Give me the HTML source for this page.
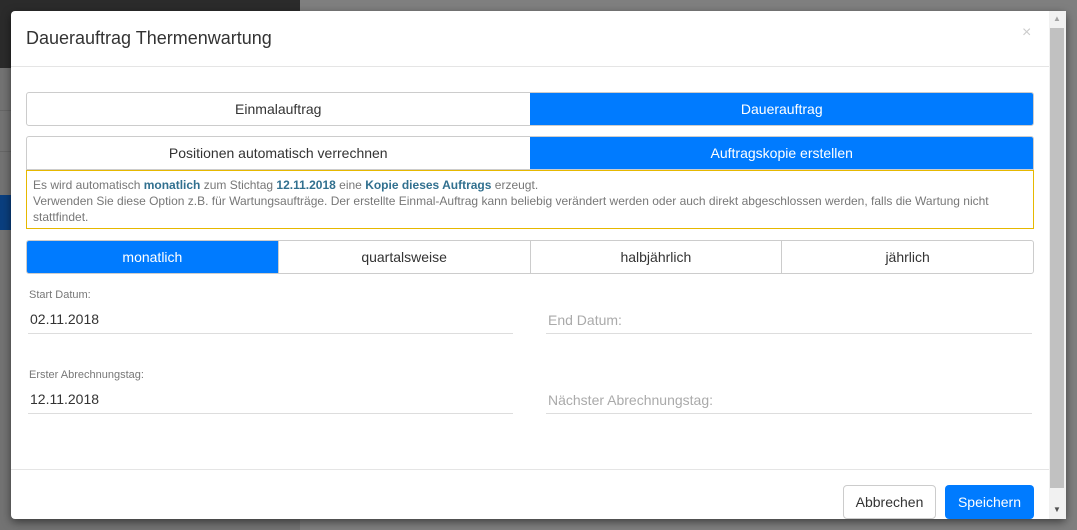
<!DOCTYPE html>
<html><head><meta charset="utf-8"><style>
*{box-sizing:border-box;margin:0;padding:0}
body{width:1077px;height:530px;overflow:hidden;position:relative;background:#7f7f7f;font-family:"Liberation Sans",Arial,sans-serif;color:#333}
.a{position:absolute}
.seg{position:absolute;display:flex;border:1px solid #ccc;border-radius:3px;overflow:hidden;background:#fff}
.seg div{flex:1;display:flex;align-items:center;justify-content:center;font-size:14px;color:#333}
.seg div+div{border-left:1px solid #ccc}
.seg .on{background:#007bff;color:#fff;border-color:#007bff}
.lbl{position:absolute;font-size:11px;color:#777}
.val{position:absolute;font-size:14px;color:#333}
.ph{position:absolute;font-size:14px;color:#aaa}
.line{position:absolute;height:1px;background:#ddd}
</style></head><body>
<div class="a" style="left:0;top:0;width:300px;height:68px;background:#2b2b2b"></div>
<div class="a" style="left:0;top:68px;width:300px;height:462px;background:#737373"></div>
<div class="a" style="left:0;top:195px;width:12px;height:35px;background:#0a3f7f"></div>
<div class="a" style="left:0;top:110px;width:300px;height:1px;background:#666"></div>
<div class="a" style="left:0;top:151px;width:300px;height:1px;background:#666"></div>
<div class="a" style="left:11px;top:11px;width:1055px;height:508px;background:#fff;border-radius:4px;box-shadow:0 3px 9px rgba(0,0,0,.5);overflow:hidden">
</div>
<div class="a" style="left:1049px;top:11px;width:17px;height:508px;background:#f1f1f1"></div>
<div class="a" style="left:1050px;top:28px;width:14px;height:460px;background:#c1c1c1"></div>
<div class="a" style="left:1053px;top:14px;font-size:8px;color:#a3a3a3">▲</div>
<div class="a" style="left:1053px;top:505px;font-size:8px;color:#505050">▼</div>
<div class="a" style="left:26px;top:28px;font-size:18px;color:#333">Dauerauftrag Thermenwartung</div>
<div class="a" style="left:1022px;top:24px;font-size:16px;color:#ccc">×</div>
<div class="a" style="left:11px;top:66px;width:1038px;height:1px;background:#e5e5e5"></div>
<div class="seg" style="left:26px;top:92px;width:1008px;height:34px"><div>Einmalauftrag</div><div class="on">Dauerauftrag</div></div>
<div class="seg" style="left:26px;top:136px;width:1008px;height:34px;border-radius:3px 3px 0 0"><div>Positionen automatisch verrechnen</div><div class="on">Auftragskopie erstellen</div></div>
<div class="a" style="left:26px;top:170px;width:1008px;height:59px;border:1px solid #e6b800;padding:6px 6px;font-size:12px;line-height:16px;color:#777">Es wird automatisch <b style="color:#31708f">monatlich</b> zum Stichtag <b style="color:#31708f">12.11.2018</b> eine <b style="color:#31708f">Kopie dieses Auftrags</b> erzeugt.<br>Verwenden Sie diese Option z.B. für Wartungsaufträge. Der erstellte Einmal-Auftrag kann beliebig verändert werden oder auch direkt abgeschlossen werden, falls die Wartung nicht stattfindet.</div>
<div class="seg" style="left:26px;top:240px;width:1008px;height:34px"><div class="on">monatlich</div><div>quartalsweise</div><div>halbjährlich</div><div>jährlich</div></div>
<div class="lbl" style="left:29px;top:289px">Start Datum:</div>
<div class="val" style="left:30px;top:311px">02.11.2018</div>
<div class="line" style="left:28px;top:333px;width:485px"></div>
<div class="ph" style="left:548px;top:312px">End Datum:</div>
<div class="line" style="left:546px;top:333px;width:486px"></div>
<div class="lbl" style="left:29px;top:369px">Erster Abrechnungstag:</div>
<div class="val" style="left:30px;top:391px">12.11.2018</div>
<div class="line" style="left:28px;top:413px;width:485px"></div>
<div class="ph" style="left:548px;top:392px">Nächster Abrechnungstag:</div>
<div class="line" style="left:546px;top:413px;width:486px"></div>
<div class="a" style="left:11px;top:469px;width:1038px;height:1px;background:#e5e5e5"></div>
<div class="a" style="left:843px;top:485px;width:93px;height:34px;border:1px solid #ccc;border-radius:4px;font-size:14px;display:flex;align-items:center;justify-content:center;color:#333">Abbrechen</div>
<div class="a" style="left:945px;top:485px;width:89px;height:34px;background:#007bff;border-radius:4px;font-size:14px;display:flex;align-items:center;justify-content:center;color:#fff">Speichern</div>
</body></html>
